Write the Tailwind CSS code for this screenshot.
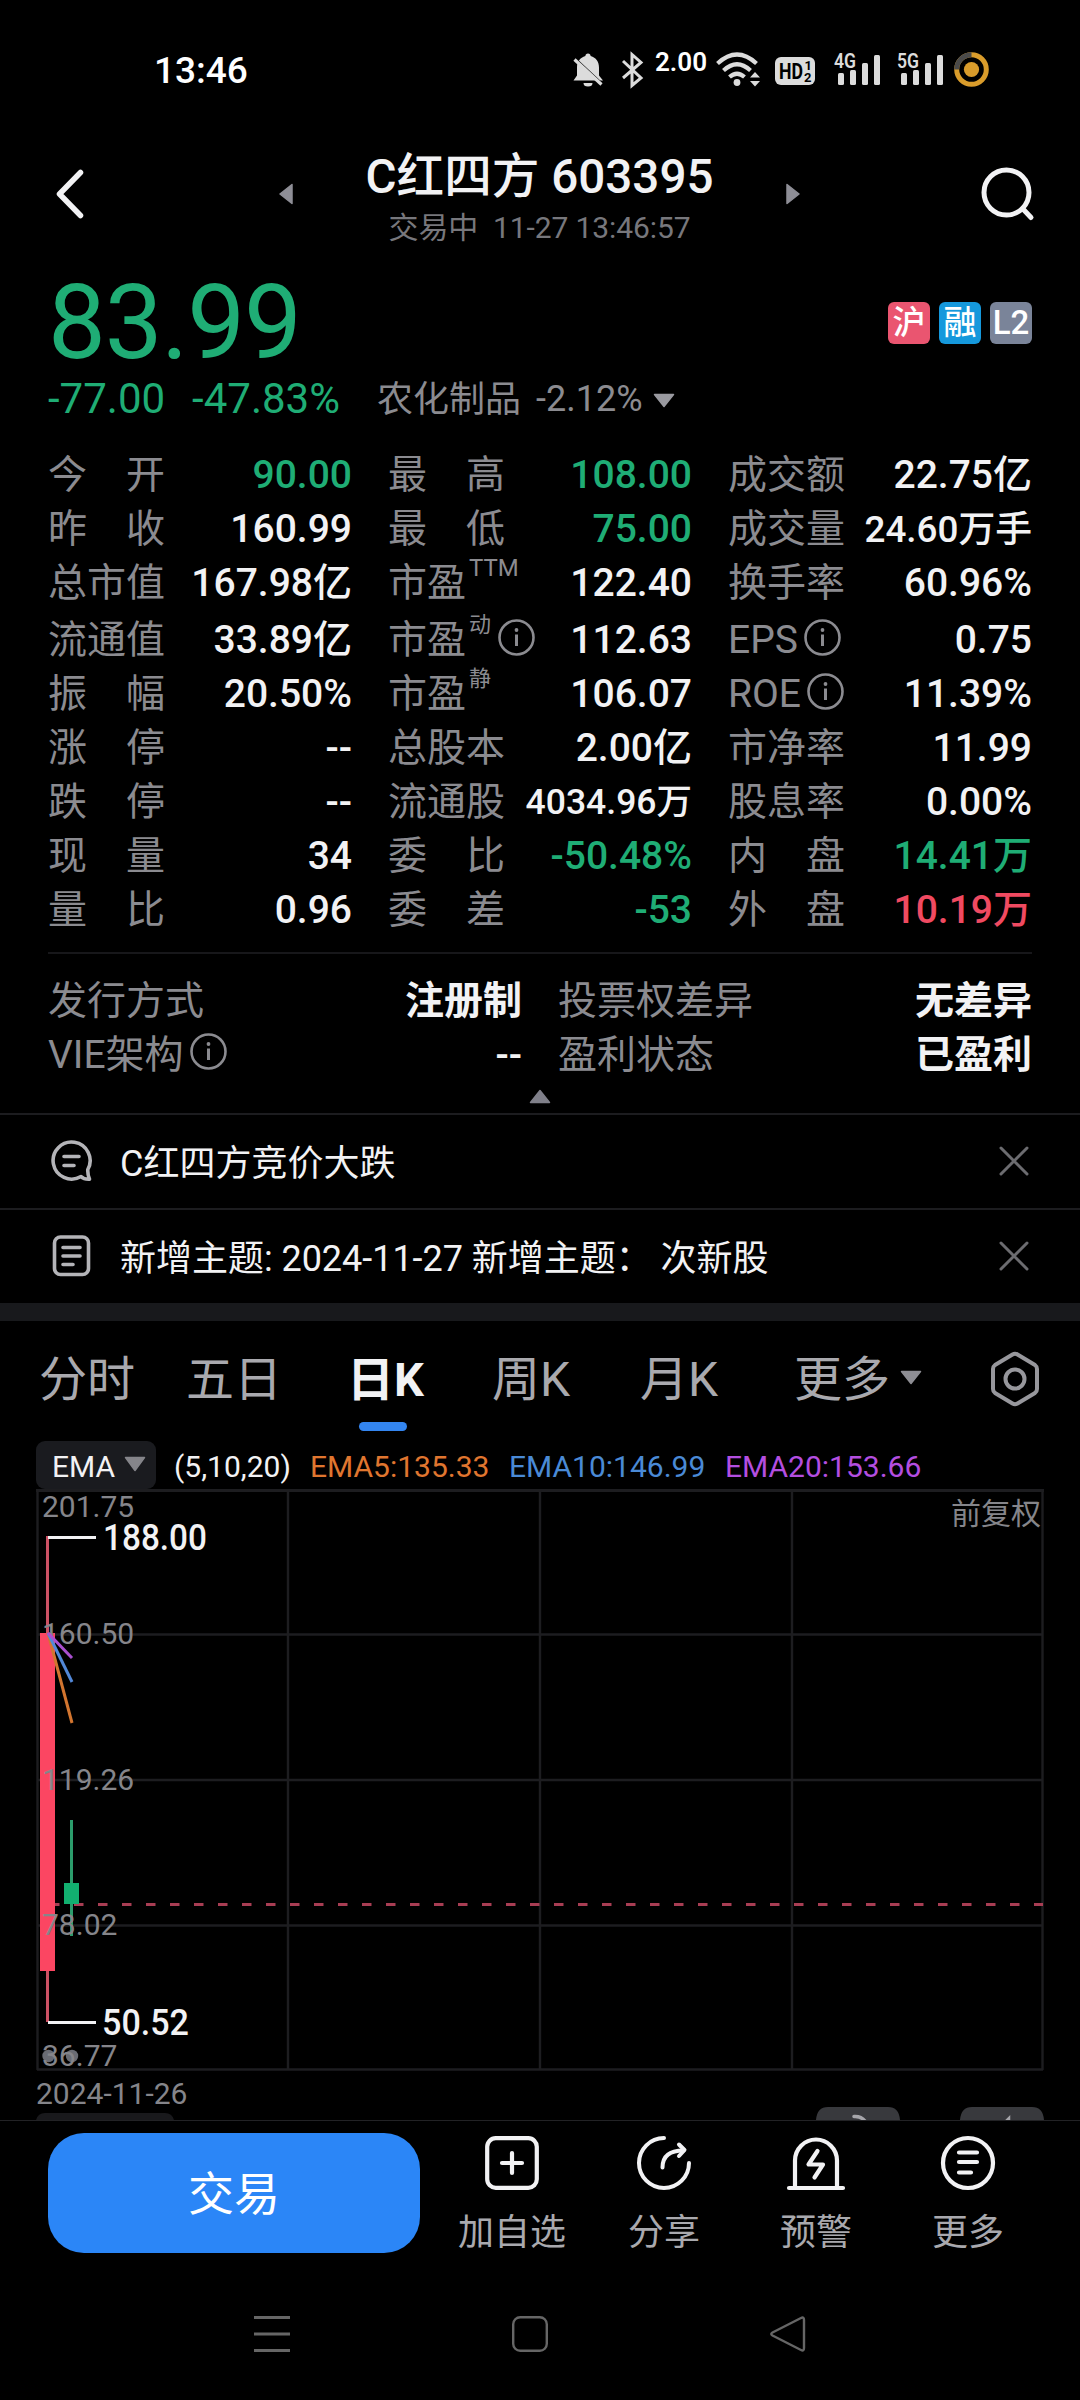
<!DOCTYPE html>
<html lang="zh-CN">
<head>
<meta charset="utf-8">
<title>C红四方 603395</title>
<script src="https://cdn.jsdelivr.net/npm/@tailwindcss/browser@4"></script>
</head>
<body class="bg-black">
<svg class="hidden">
  <symbol id="info" viewBox="0 0 37 37"><circle cx="18.5" cy="18.5" r="17" fill="none" stroke="#8b8b90" stroke-width="2.6"/><circle cx="18.5" cy="11" r="1.9" fill="#8b8b90"/><path d="M18.5 15.5V27" stroke="#8b8b90" stroke-width="3"/></symbol>
  <symbol id="close" viewBox="0 0 30 30"><path d="M2 2L28 28M28 2L2 28" stroke="#6c6c70" stroke-width="3" stroke-linecap="round"/></symbol>
</svg>
<div class="w-[1080px] h-[2400px] bg-black text-[#f2f2f4] overflow-hidden flex flex-col font-['Roboto','Noto_Sans_CJK_SC',sans-serif]">

  <!-- status bar -->
  <header class="h-[138px] shrink-0 flex items-center justify-between pl-[154px] pr-[90px]">
    <div class="text-[37px] leading-none font-medium text-white mt-[3px]">13:46</div>
    <svg class="w-[420px] h-[40px]" viewBox="570 48 420 40">
      <g fill="#dcdcdc">
        <path d="M588 52.500c1.600 0 2.600 1 2.600 2.500c5.500 1.500 8.400 6 8.400 11.500v8l4 5H573.500l3.500-5v-8c0-5.500 3-10 8.400-11.500c0-1.500 1-2.500 2.600-2.500z"/>
        <path d="M583.500 82h9a4.500 3.500 0 0 1-9 0z"/>
        <path d="M573 56L604 85" stroke="#000" stroke-width="3"/>
        <path d="M574.500 58.500L601.500 83.500" stroke="#dcdcdc" stroke-width="3.200"/>
      </g>
      <path d="M623 60L641 77L632 84.500V53.500L641 61.500L623 77" fill="none" stroke="#dcdcdc" stroke-width="3"/>
      <text x="655" y="70" class="text-[26px] font-semibold" fill="#fff" textLength="52">2.00</text>
      <g fill="none" stroke="#dcdcdc" stroke-width="4.200">
        <path d="M717.500 62.500Q737 44.500 756.500 62.500"/><path d="M723.500 69.500Q737 57 750.500 69.500"/><path d="M729.500 76Q737 69.500 744.500 76"/>
      </g>
      <g fill="#dcdcdc">
        <circle cx="737" cy="81.500" r="3.400"/>
        <path d="M750 76.500L755 71L760 76.500zM750 80L755 85.500L760 80z"/>
        <rect x="775" y="56" width="40" height="28" rx="6"/>
      </g>
      <text x="779" y="78" class="text-[22px] font-bold" fill="#000" textLength="24" lengthAdjust="spacingAndGlyphs">HD</text>
      <text x="804.500" y="69" class="text-[13px] font-bold" fill="#000">1</text>
      <text x="804" y="81" class="text-[13px] font-bold" fill="#000">2</text>
      <g fill="#dcdcdc">
        <rect x="838" y="72" width="6" height="12" rx="1.500"/><rect x="850" y="69" width="6" height="15" rx="1.500"/><rect x="862" y="62" width="6" height="22" rx="1.500"/><rect x="874" y="54" width="6" height="30" rx="1.500"/>
        <rect x="901" y="72" width="6" height="12" rx="1.500"/><rect x="913" y="69" width="6" height="15" rx="1.500"/><rect x="925" y="62" width="6" height="22" rx="1.500"/><rect x="937" y="54" width="6" height="30" rx="1.500"/>
      </g>
      <text x="834" y="67" class="text-[20px] font-semibold" fill="#dcdcdc" textLength="22" lengthAdjust="spacingAndGlyphs">4G</text>
      <text x="897" y="67" class="text-[20px] font-semibold" fill="#dcdcdc" textLength="22" lengthAdjust="spacingAndGlyphs">5G</text>
      <circle cx="971.500" cy="68.500" r="14.800" fill="none" stroke="#d99c2b" stroke-width="5"/>
      <path d="M956.700 68.500A14.800 14.800 0 0 1 971.500 53.700" fill="none" stroke="#4a4a4a" stroke-width="5"/>
      <circle cx="971.500" cy="68.500" r="7.600" fill="#d99c2b"/>
    </svg>
  </header>

  <!-- title bar -->
  <div class="h-[122px] shrink-0 flex items-start justify-between pl-[54px] pr-[45px]">
    <svg class="w-[34px] h-[56px] mt-[28px]" viewBox="0 0 34 56" fill="none" stroke="#f2f2f4" stroke-width="5.500" stroke-linecap="round" stroke-linejoin="round"><path d="M26.500 6.500L5.500 28L26.500 49.500"/></svg>
    <div class="flex items-start w-[521px] justify-between ml-[12px]">
      <svg class="w-[14px] h-[22px] mt-[45px]" viewBox="0 0 14 22"><path d="M13 1.500V20.500L1 11z" fill="#8e8e96" stroke="#8e8e96" stroke-width="1.500" stroke-linejoin="round"/></svg>
      <div class="flex flex-col items-center">
        <h1 class="text-[47.600px] leading-[56px] mt-[11px] font-medium whitespace-nowrap">C红四方 603395</h1>
        <div class="text-[30px] leading-[40px] mt-[3px] text-[#77777c] whitespace-nowrap tracking-[-0.100px]">交易中&nbsp; 11-27 13:46:57</div>
      </div>
      <svg class="w-[14px] h-[22px] mt-[45px]" viewBox="0 0 14 22"><path d="M1 1.500V20.500L13 11z" fill="#8e8e96" stroke="#8e8e96" stroke-width="1.500" stroke-linejoin="round"/></svg>
    </div>
    <svg class="w-[56px] h-[56px] mt-[28px]" viewBox="979 166 56 56" fill="none" stroke="#f2f2f4" stroke-width="5" stroke-linecap="round"><circle cx="1006.500" cy="192.500" r="22.500"/><path d="M1022.500 208.500L1031 217.500"/></svg>
  </div>

  <!-- price -->
  <section class="h-[188px] shrink-0 px-12">
    <div class="flex justify-between h-[112px]">
      <div class="text-[103px] leading-[126px] tracking-[-1.200px] text-[#1fad75]">83.99</div>
      <div class="flex gap-[9px] mt-[42px] text-white font-medium text-[33px] leading-[42px] text-center">
        <span class="w-[42px] h-[42px] rounded-md bg-[#ea5570]">沪</span>
        <span class="w-[42px] h-[42px] rounded-md bg-[#1598dc]">融</span>
        <span class="w-[42px] h-[42px] rounded-md bg-[#7a8499]">L2</span>
      </div>
    </div>
    <div class="flex items-center h-[54px] leading-[54px] text-[42px] text-[#1fad75] whitespace-nowrap">
      <span>-77.00</span><span class="ml-[27px]">-47.83%</span>
      <span class="ml-[37px] mt-[2px] text-[36px] text-[#8b8b90]">农化制品</span><span class="ml-[15px] text-[36px] text-[#8b8b90]">-2.12%</span>
      <svg class="w-[22px] h-[15px] ml-[10px] mt-[2px]" viewBox="0 0 22 15"><path d="M1.500 1.500H20.500L11 13.500z" fill="#9a9aa0" stroke="#9a9aa0" stroke-width="1.500" stroke-linejoin="round"/></svg>
    </div>
  </section>

  <!-- quote figures -->
  <section class="shrink-0 mx-12 h-[506px] border-b-2 border-[#17171a] grid grid-cols-3 gap-x-9 text-[39px] leading-[55px] whitespace-nowrap">
    <dl class="flex flex-col [&>div]:flex [&>div]:h-[54px] [&>div]:justify-between [&_dt]:text-[#8b8b90] [&_dd]:font-medium">
      <div><dt>今　开</dt><dd class="text-[#1fad75]">90.00</dd></div>
      <div><dt>昨　收</dt><dd>160.99</dd></div>
      <div><dt>总市值</dt><dd>167.98亿</dd></div>
      <div class="mt-[3px]"><dt>流通值</dt><dd>33.89亿</dd></div>
      <div><dt>振　幅</dt><dd>20.50%</dd></div>
      <div><dt>涨　停</dt><dd>--</dd></div>
      <div><dt>跌　停</dt><dd>--</dd></div>
      <div><dt>现　量</dt><dd>34</dd></div>
      <div><dt>量　比</dt><dd>0.96</dd></div>
    </dl>
    <dl class="flex flex-col [&>div]:flex [&>div]:h-[54px] [&>div]:justify-between [&_dt]:text-[#8b8b90] [&_dd]:font-medium">
      <div><dt>最　高</dt><dd class="text-[#1fad75]">108.00</dd></div>
      <div><dt>最　低</dt><dd class="text-[#1fad75]">75.00</dd></div>
      <div><dt class="flex">市盈<span class="text-[24px] leading-[24px] ml-[3px]">TTM</span></dt><dd>122.40</dd></div>
      <div class="mt-[3px]"><dt class="flex">市盈<span class="text-[22px] leading-[24px] ml-[3px]">动</span><svg class="w-[37px] h-[37px] mt-[6px] ml-[7px]"><use href="#info"/></svg></dt><dd>112.63</dd></div>
      <div><dt class="flex">市盈<span class="text-[22px] leading-[24px] ml-[3px]">静</span></dt><dd>106.07</dd></div>
      <div><dt>总股本</dt><dd>2.00亿</dd></div>
      <div><dt>流通股</dt><dd class="text-[35.500px]">4034.96万</dd></div>
      <div><dt>委　比</dt><dd class="text-[#1fad75]">-50.48%</dd></div>
      <div><dt>委　差</dt><dd class="text-[#1fad75]">-53</dd></div>
    </dl>
    <dl class="flex flex-col [&>div]:flex [&>div]:h-[54px] [&>div]:justify-between [&_dt]:text-[#8b8b90] [&_dd]:font-medium">
      <div><dt>成交额</dt><dd>22.75亿</dd></div>
      <div><dt>成交量</dt><dd class="text-[36.800px]">24.60万手</dd></div>
      <div><dt>换手率</dt><dd>60.96%</dd></div>
      <div class="mt-[3px]"><dt class="flex">EPS<svg class="w-[37px] h-[37px] mt-[6px] ml-[6px]"><use href="#info"/></svg></dt><dd>0.75</dd></div>
      <div><dt class="flex">ROE<svg class="w-[37px] h-[37px] mt-[6px] ml-[6px]"><use href="#info"/></svg></dt><dd>11.39%</dd></div>
      <div><dt>市净率</dt><dd>11.99</dd></div>
      <div><dt>股息率</dt><dd>0.00%</dd></div>
      <div><dt>内　盘</dt><dd class="text-[#1fad75]">14.41万</dd></div>
      <div><dt>外　盘</dt><dd class="text-[#f04a61]">10.19万</dd></div>
    </dl>
  </section>

  <!-- listing details -->
  <section class="shrink-0 h-[159px] pt-[20px] flex flex-col items-center">
    <div class="grid grid-cols-2 gap-x-9 w-[984px] h-[108px] text-[39px] leading-[55px] whitespace-nowrap [&>div]:h-[54px]">
      <div class="flex justify-between"><span class="text-[#8b8b90]">发行方式</span><b class="font-bold">注册制</b></div>
      <div class="flex justify-between"><span class="text-[#8b8b90]">投票权差异</span><b class="font-bold">无差异</b></div>
      <div class="flex justify-between"><span class="flex text-[#8b8b90]">VIE架构<svg class="w-[37px] h-[37px] mt-[5px] ml-[6px]"><use href="#info"/></svg></span><b class="font-medium">--</b></div>
      <div class="flex justify-between"><span class="text-[#8b8b90]">盈利状态</span><b class="font-bold">已盈利</b></div>
    </div>
    <svg class="w-[22px] h-[15px] mt-[7px]" viewBox="0 0 22 15"><path d="M11 1.500L20.500 13.500H1.500z" fill="#80808a" stroke="#80808a" stroke-width="1.500" stroke-linejoin="round"/></svg>
  </section>

  <!-- notices -->
  <section class="shrink-0 text-[36px] leading-[88px] whitespace-nowrap">
    <div class="h-[95px] border-t-2 border-[#1c1c1f] flex items-center pl-[48px] pr-[51px]">
      <svg class="w-[46px] h-[46px] -mt-[2px]" viewBox="0 0 46 46" fill="none" stroke="#b4b4b8" stroke-width="3.600" stroke-linecap="round" stroke-linejoin="round"><path d="M39.800 31.500A18.500 18.500 0 1 0 33 38.500Q36 41.500 41.500 41.200Q39.500 36 39.800 31.500z"/><path d="M16 18.500H31M16 27.500H26"/></svg>
      <span class="ml-[26px] mt-[4px] grow">C红四方竞价大跌</span>
      <svg class="w-[30px] h-[30px] -mt-[2px]"><use href="#close"/></svg>
    </div>
    <div class="h-[95px] border-t-2 border-[#1c1c1f] flex items-center pl-[48px] pr-[51px]">
      <svg class="w-[46px] h-[46px] -mt-[2px]" viewBox="0 0 46 46" fill="none" stroke="#b4b4b8" stroke-width="3.600" stroke-linecap="round"><rect x="6.500" y="4" width="34" height="37.500" rx="6"/><path d="M15 14.500H32M15 23H32M15 31.500H25"/></svg>
      <span class="ml-[26px] mt-[4px] grow tracking-[-0.030px]">新增主题: 2024-11-27 新增主题： 次新股</span>
      <svg class="w-[30px] h-[30px] -mt-[2px]"><use href="#close"/></svg>
    </div>
    <div class="h-[18px] bg-[#18191c]"></div>
  </section>

  <!-- period tabs -->
  <nav class="shrink-0 h-[120px] flex items-start pl-[39px] text-[48px] leading-[118px] text-[#a9a9ae] whitespace-nowrap">
    <span class="w-[147px]">分时</span>
    <span class="w-[161px]">五日</span>
    <span class="w-[145px] flex flex-col text-[#f2f2f4] font-bold"><span class="h-[101px] text-[47px]">日K</span><i class="w-[48px] h-[9px] rounded-full bg-[#3385f0] ml-[12px]"></i></span>
    <span class="w-[148px]">周K</span>
    <span class="w-[154px]">月K</span>
    <span class="w-[106px]">更多</span>
    <svg class="w-[22px] h-[15px] mt-[49px]" viewBox="0 0 22 15"><path d="M1.500 1.500H20.500L11 13.500z" fill="#8e8e94" stroke="#8e8e94" stroke-width="1.500" stroke-linejoin="round"/></svg>
    <svg class="w-[56px] h-[60px] ml-[65px] mt-[28px]" viewBox="0 0 56 60" fill="none" stroke="#97979c" stroke-width="4" stroke-linejoin="round"><path d="M25.500 5.500Q28 4 30.500 5.500L48 16Q50 17.500 50 20V40Q50 42.500 48 44L30.500 54.500Q28 56 25.500 54.500L8 44Q6 42.500 6 40V20Q6 17.500 8 16z"/><circle cx="28" cy="30" r="9.500"/></svg>
  </nav>

  <!-- indicator row -->
  <div class="shrink-0 h-[48px] pl-[36px] flex text-[30px] leading-[51px] whitespace-nowrap">
    <span class="w-[120px] h-[48px] rounded-[9px] bg-[#1a1b1f] pl-[16px] flex">EMA<svg class="w-[22px] h-[16px] mt-[15px] ml-[9px]" viewBox="0 0 22 16"><path d="M1.500 1.500H20.500L11 14.500z" fill="#85858a" stroke="#85858a" stroke-width="1.500" stroke-linejoin="round"/></svg></span>
    <span class="ml-[18px] w-[136px]">(5,10,20)</span>
    <span class="w-[199px] text-[#e0762f]">EMA5:135.33</span>
    <span class="w-[216px] text-[#4a8ad6]">EMA10:146.99</span>
    <span class="text-[#b44ee0]">EMA20:153.66</span>
  </div>

  <!-- candlestick chart -->
  <svg class="shrink-0 w-[1080px] h-[631px]" viewBox="0 1489 1080 631">
    <g stroke="#1d1d20" stroke-width="2.400" fill="none">
      <path d="M36 1490.500H1044" stroke-width="3"/>
      <path d="M37.500 1490V2070M288 1490V2070M540 1490V2070M792 1490V2070M1042.500 1490V2070M37 1634.500H1043M37 1780H1043M37 1925.500H1043M37 2069.500H1043"/>
    </g>
    <path d="M50 1904.500H1043" stroke="#a83d53" stroke-width="3" stroke-dasharray="9.500 14.500"/>
    <path d="M47.500 1536V2022" stroke="#cc5164" stroke-width="3"/>
    <rect x="40" y="1633" width="15" height="338" fill="#fb4662"/>
    <path d="M71.500 1820V1936" stroke="#2b9c6b" stroke-width="3"/>
    <rect x="64" y="1883" width="15" height="21" fill="#12b070"/>
    <g fill="#6a6c74"><circle cx="48.500" cy="2056" r="6.200"/><circle cx="72" cy="2056" r="6.200"/></g>
    <g class="text-[30px]" fill="#85858a">
      <text x="42" y="1517">201.75</text>
      <text x="42" y="1644">160.50</text>
      <text x="42" y="1790">119.26</text>
      <text x="42" y="1935">78.02</text>
      <text x="42" y="2066">36.77</text>
      <text x="36" y="2104">2024-11-26</text>
      <text x="951" y="1524">前复权</text>
    </g>
    <g fill="none" stroke-width="3">
      <path d="M48 1633L72 1723" stroke="#d2752f"/><path d="M48 1633L72 1682" stroke="#5288d8"/><path d="M48 1633L72 1658" stroke="#a94fd0"/>
      <path d="M48 1537.500H96M48 2022.500H96" stroke="#f2f2f4"/>
    </g>
    <g class="text-[36px] font-medium" fill="#f2f2f4">
      <text x="103" y="1550" textLength="104" lengthAdjust="spacingAndGlyphs">188.00</text>
      <text x="102" y="2035" textLength="87" lengthAdjust="spacingAndGlyphs">50.52</text>
    </g>
    <path d="M36 2120Q38 2113 45 2113H165Q172 2113 174 2120z" fill="#19191c"/>
    <path d="M816 2120Q817 2107 828 2107H888Q899 2107 900 2120zM960 2120Q961 2107 972 2107H1032Q1043 2107 1044 2120z" fill="#38393d"/>
    <path d="M854 2116.500Q861 2116 865 2121" stroke="#a5a5aa" stroke-width="3.500" fill="none" stroke-linecap="round"/>
    <path d="M1006 2121L1009 2118V2121" stroke="#a5a5aa" stroke-width="2.500" fill="none"/>
  </svg>

  <!-- action bar -->
  <footer class="shrink-0 h-[150px] border-t border-[#222225] flex pl-12 pr-[36px]">
    <button class="w-[372px] h-[120px] mt-[12px] rounded-[36px] bg-[#2b86f7] text-white text-[46px] leading-[122px] font-normal">交易</button>
    <div class="grow flex ml-[16px] text-[36px] leading-[48px] text-[#a9a9ae] text-center">
      <div class="flex-1 flex flex-col items-center pt-[12px]">
        <svg class="w-[60px] h-[60px]" viewBox="0 0 60 60" fill="none" stroke="#f2f2f4" stroke-width="4.200" stroke-linecap="round"><rect x="5.200" y="5.200" width="49.600" height="49.600" rx="8.500"/><path d="M30 20V40M20 30H40"/></svg>
        <span class="mt-[16px]">加自选</span>
      </div>
      <div class="flex-1 flex flex-col items-center pt-[12px]">
        <svg class="w-[60px] h-[60px]" viewBox="0 0 60 60" fill="none" stroke="#f2f2f4" stroke-width="4" stroke-linecap="round" stroke-linejoin="round"><path d="M30 5A25 25 0 1 0 55 30"/><path d="M28.500 34.500C28.500 23 36 17.500 49.500 17.500"/><path d="M45 11.500L50.500 17L45 23"/></svg>
        <span class="mt-[16px]">分享</span>
      </div>
      <div class="flex-1 flex flex-col items-center pt-[12px]">
        <svg class="w-[60px] h-[60px]" viewBox="0 0 60 60" fill="none" stroke="#f2f2f4" stroke-width="4.200" stroke-linecap="round" stroke-linejoin="round"><path d="M3 55H57M9 54V27.500A21 21 0 0 1 51 27.500V54"/><path d="M31.500 18L22.500 31.500H37L28.500 44.500"/></svg>
        <span class="mt-[16px]">预警</span>
      </div>
      <div class="flex-1 flex flex-col items-center pt-[12px]">
        <svg class="w-[60px] h-[60px]" viewBox="0 0 60 60" fill="none" stroke="#f2f2f4" stroke-width="4.200" stroke-linecap="round"><circle cx="30" cy="30" r="25"/><path d="M21 19.500H39M21 29H39M21 39.500H33"/></svg>
        <span class="mt-[16px]">更多</span>
      </div>
    </div>
  </footer>

  <!-- system navigation -->
  <div class="shrink-0 h-[128px] flex items-center justify-between pl-[251px] pr-[271px]">
    <svg class="w-[42px] h-[42px]" viewBox="0 0 42 42" stroke="#666" stroke-width="3"><path d="M3 4.500H39M3 21H39M3 37.500H39"/></svg>
    <svg class="w-[42px] h-[42px]" viewBox="0 0 42 42" fill="none" stroke="#666" stroke-width="2.400"><rect x="4.200" y="4.200" width="33.600" height="33.600" rx="7"/></svg>
    <svg class="w-[42px] h-[42px]" viewBox="0 0 42 42" fill="none" stroke="#666" stroke-width="2.400" stroke-linejoin="round"><path d="M34 5Q37 3.500 37 7V35Q37 38.500 34 37L5.500 22.500Q3 21 5.500 19.500z"/></svg>
  </div>
</div>
</body>
</html>
